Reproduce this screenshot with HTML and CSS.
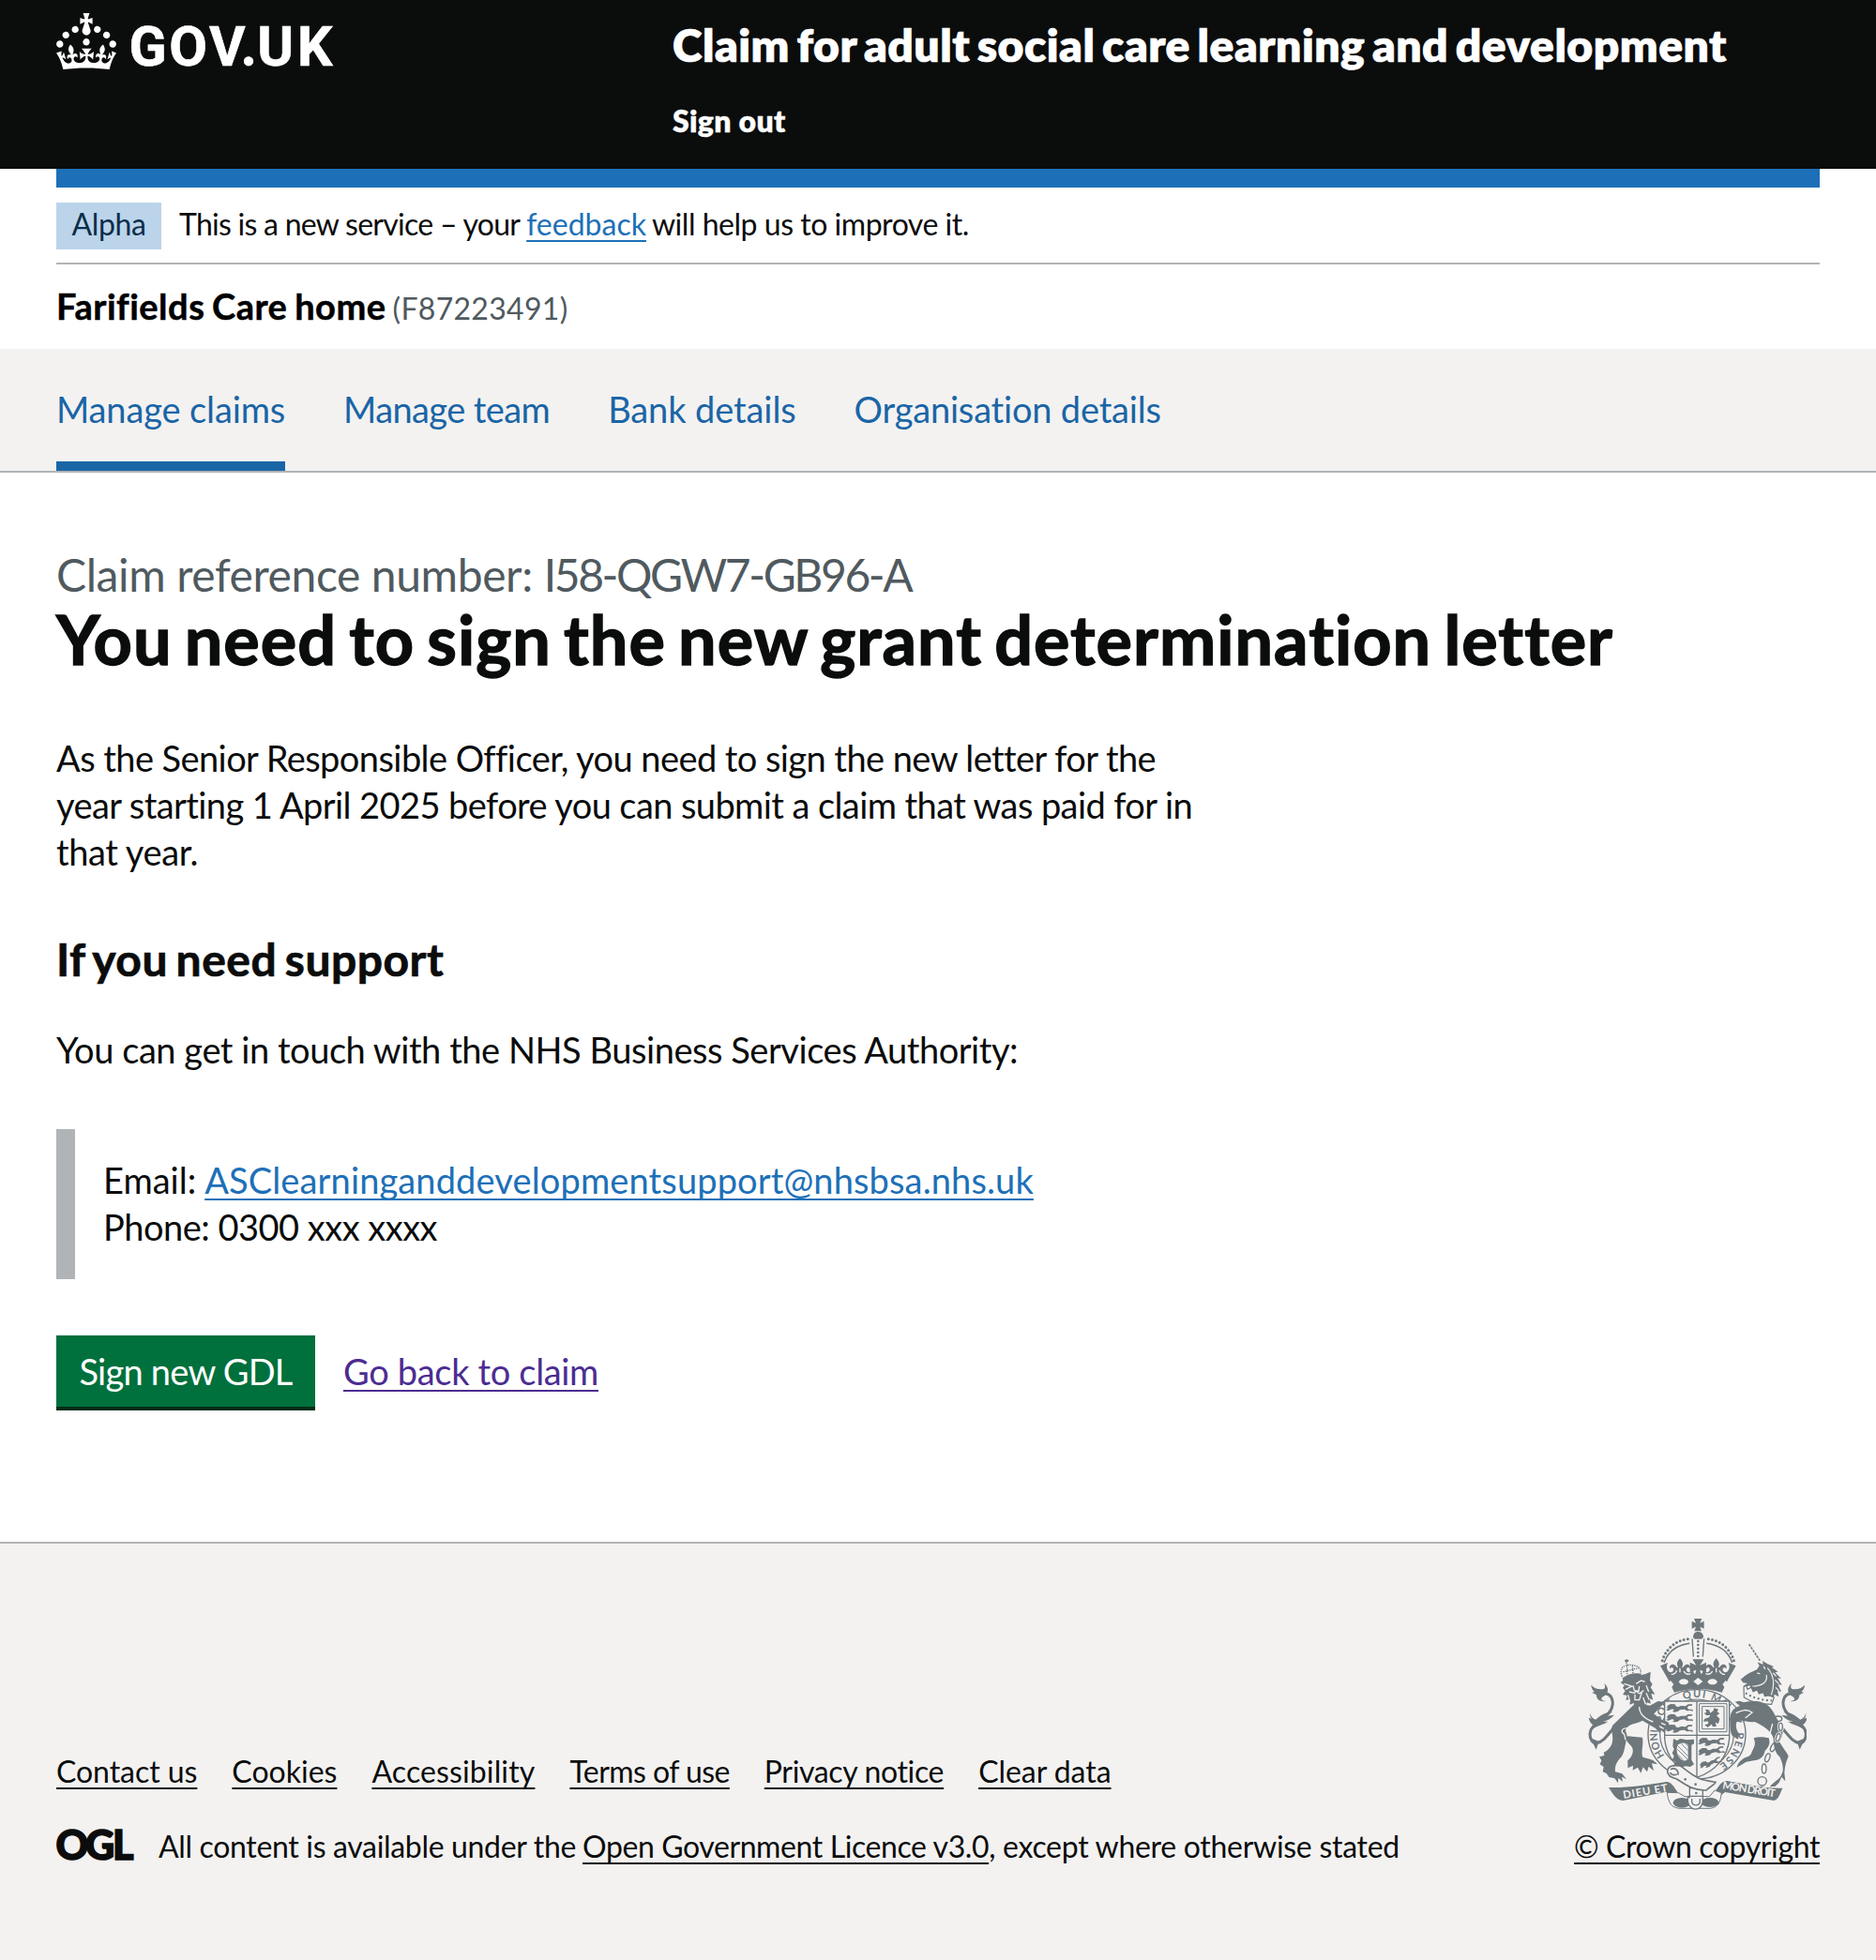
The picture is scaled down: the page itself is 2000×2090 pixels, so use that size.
FILE: index.html
```html
<!DOCTYPE html>
<html lang="en">
<head>
<meta charset="utf-8">
<title>You need to sign the new grant determination letter</title>
<link rel="stylesheet" href="styles.css">
</head>
<body>
<header class="header">
  <a class="header-logo" href="#" aria-label="GOV.UK">
    <svg width="300" height="76" viewBox="0 0 300 76">
      <path fill="#fff" transform="scale(2)" d="M22.6 10.4c-1 .4-2-.1-2.4-1-.4-.9.1-2 1-2.4.9-.4 2 .1 2.4 1s-.1 2-1 2.4m-13.2 0c.9.4 2-.1 2.4-1 .4-.9-.1-2-1-2.4-.9-.4-2 .1-2.4 1s0 2 1 2.4m7.3 6.7c-.9.4-2-.1-2.4-1-.4-.9.1-2 1-2.4.9-.4 2 .1 2.4 1s-.1 2-1 2.4m10.8-3.7c-1 .4-2-.1-2.4-1-.4-.9.1-2 1-2.4.9-.4 2 .1 2.4 1s0 2-1 2.4m3.3 4.8c-1 .4-2-.1-2.4-1-.4-.9.1-2 1-2.4.9-.4 2 .1 2.4 1s-.1 2-1 2.4M17 4.7l2.3 1.2V2.5l-2.3.7-.2-.2.9-3h-3.4l.9 3-.2.2c-.1.1-2.3-.7-2.3-.7v3.4L15 4.7c.1.1.1.2.2.2l-1.3 4c-.1.2-.1.4-.1.6 0 1.1.8 2 1.9 2.2h.7c1-.2 1.9-1.1 1.9-2.1 0-.2 0-.4-.1-.6l-1.3-4c-.1-.2 0-.2.1-.3M4.4 13.4c.9.4 2-.1 2.4-1 .4-.9-.1-2-1-2.4-.9-.4-2 .1-2.4 1s.1 2 1 2.4m-3.2 4.8c.9.4 2-.1 2.4-1 .4-.9-.1-2-1-2.4-.9-.4-2 .1-2.4 1s0 2 1 2.4m14.8 11c4.4 0 8.600.3 12.3.8 1.100-4.500 2.400-7 3.700-8.800l-2.500-.9c.2 1.300.3 1.900 0 2.700-.4-.4-.8-1.100-1.100-2.300l-1.200 4c.7-.5 1.300-.8 2-.9-1.100 2.500-2.600 3.100-3.500 3-1.100-.2-1.700-1.200-1.500-2.100.3-1.200 1.500-1.500 2.100-.1 1.100-2.300-.8-3-2-2.300 1.900-1.900 2.100-3.500.6-5.600-2.100 1.600-2.100 3.200-1.200 5.500-1.200-1.400-3.200-.6-2.500 1.600.9-1.400 2.100-.5 1.900.8-.2 1.100-1.700 2.100-3.500 1.900-2.700-.2-2.900-2.100-2.900-3.600.7-.1 1.900.5 2.900 1.900l.4-4.300c-1.100 1.100-2.100 1.400-3.200 1.400.4-1.200 2.100-3 2.100-3h-5.400s1.700 1.900 2.100 3c-1.100 0-2.100-.2-3.200-1.400l.4 4.300c1-1.400 2.200-2 2.900-1.900-.1 1.500-.2 3.400-2.900 3.600-1.900.2-3.400-.8-3.500-1.900-.2-1.300 1-2.200 1.900-.8.7-2.300-1.200-3-2.500-1.600.9-2.200.9-3.900-1.200-5.500-1.500 2-1.300 3.700.6 5.600-1.200-.7-3.100 0-2 2.300.6-1.400 1.800-1.100 2.100.1.2.9-.3 1.900-1.500 2.100-.9.2-2.400-.5-3.500-3 .6 0 1.200.3 2 .9l-1.200-4c-.3 1.100-.7 1.900-1.100 2.300-.3-.8-.2-1.400 0-2.700l-2.900.9C1.300 23 2.600 25.500 3.700 30c3.700-.5 7.900-.8 12.300-.8"/>
      <text class="logotype" x="77.500" y="56"><tspan class="logotype-gov">GOV</tspan><tspan class="logotype-dot" dx="-6">.</tspan><tspan class="logotype-uk" dx="2">UK</tspan></text>
    </svg>
  </a>
  <div class="header-content">
    <a class="service-name" href="#">Claim for adult social care learning and development</a>
    <a class="sign-out" href="#">Sign out</a>
  </div>
</header>

<div class="container">
  <div class="blue-bar"></div>
  <div class="phase-banner">
    <strong class="tag">Alpha</strong>
    <div class="phase-text"><span class="phase-a">This is a new service – your</span><a class="link phase-b" href="#">feedback</a><span class="phase-c">will help us to improve it.</span></div>
  </div>
  <div class="organisation"><span class="org-name">Farifields Care home</span><span class="org-code">(F87223491)</span></div>
</div>

<nav class="service-nav">
  <a class="nav-item nav-claims active" href="#">Manage claims</a>
  <a class="nav-item nav-team" href="#">Manage team</a>
  <a class="nav-item nav-bank" href="#">Bank details</a>
  <a class="nav-item nav-org" href="#">Organisation details</a>
</nav>

<main class="container main">
  <div class="caption">Claim reference number: <span class="reference">I58-QGW7-GB96-A</span></div>
  <h1>You need to sign the new grant determination letter</h1>
  <p class="body intro"><span class="l1">As the Senior Responsible Officer, you need to sign the new letter for the</span><br><span class="l2">year starting 1 April 2025 before you can submit a claim that was paid for in</span><br><span class="l3">that year.</span></p>
  <h2>If you need support</h2>
  <p class="body contact">You can get in touch with the NHS Business Services Authority:</p>
  <div class="inset">
    <div><span class="email-label">Email:</span><a class="link email" href="#">ASClearninganddevelopmentsupport@nhsbsa.nhs.uk</a></div>
    <div class="phone">Phone: 0300 xxx xxxx</div>
  </div>
  <div class="actions">
    <button class="button">Sign new GDL</button>
    <a class="link visited" href="#">Go back to claim</a>
  </div>
</main>

<footer class="footer">
  <div class="footer-meta">
    <div class="footer-links">
      <a class="flink f1" href="#">Contact us</a>
      <a class="flink f2" href="#">Cookies</a>
      <a class="flink f3" href="#">Accessibility</a>
      <a class="flink f4" href="#">Terms of use</a>
      <a class="flink f5" href="#">Privacy notice</a>
      <a class="flink f6" href="#">Clear data</a>
    </div>
    <div class="licence">
      <svg class="ogl" width="82" height="34" viewBox="0 0 82 34"><text class="ogl-text" y="33"><tspan x="-.500 31 60">OGL</tspan></text></svg>
      <div><span class="lic-a">All content is available under the</span><a class="flink lic-b" href="#">Open Government Licence v3.0</a><span class="lic-c">, except where otherwise stated</span></div>
    </div>
  </div>
  <div class="footer-crown">
    <svg class="crest" width="234" height="206" viewBox="69 45 702 618">
      <defs>
        <path id="ring" d="M317 486A126 118 0 1 1 442 534"/>
        <path id="passant" d="M0 5l9-4 13 1 4 7 8 1c10-6 16 0 24-4l6-4h14l-2 5h-10l-5 5 5 6h12l2 6-10-2-10 1-8-5-14 2-8 6-12 1-4-4 6-1-6-5-7 3-8 3-5-4 6-3-4-4z"/>
        <g id="tail">
          <path class="line" stroke-width="9" d="M160 392C136 416 120 446 98 446C84 446 78 430 78 416C78 380 152 366 151 316C150 298 142 290 128 287"/>
          <path d="M82 260c10 12 28 16 42 12 4-5 3-11-1-17 14 10 15 24 8 35-6 6-18 8-16 16 2 4 8 6 14 6-20 4-31-8-30-20l-15-8 9-1c-6-6-11-13-11-23z"/>
          <path d="M78 350c0 9 2 14 6 18l-10-3c3 14 10 22 18 24l-12 18c18-18 40-18 56-30l-16 1c14-4 28-12 36-22l-22 3 16-14c-22 2-40 14-54 26-10-4-15-12-18-21z"/>
          <path d="M80 430l18 37 6-18 12-4z"/>
        </g>
        <g id="half-crown">
          <path class="line" stroke-width="4.500" d="M397 127C355 133 326 156 315 189"/>
          <path class="line" stroke-width="9" stroke-linecap="round" stroke-dasharray="0 12.500" d="M391 113C350 118 318 148 308 188"/>
          <path d="M303 199l24-10-3 9c-1 10 3 18 9 21 8 2 14-4 12-11-2-5-9-4-11 1-4-10 4-17 13-14 4 2 7 5 9 9l4-1c-6-8-4-17 6-28 10 11 12 20 6 28l4 1c2-4 5-7 9-9 9-3 17 4 13 14-2-5-9-6-11-1-2 7 4 13 12 11 5-2 8-6 9-12l26 8v57q-46 0-86 12l-20-42z"/>
          <path class="cut" stroke-width="4" d="M338 226q12 2 18-12M366 206v14M378 216q8 14 22 8"/>
          <ellipse class="bg" cx="378" cy="250" rx="15" ry="9"/>
          <path class="bg" d="M336 246l10 12-8 12-12-14z"/>
        </g>
      </defs>
      <g class="ink">
        <use href="#tail"/>
        <use href="#tail" transform="matrix(-1 0 0 1 847 0)"/>
        <use href="#half-crown"/>
        <use href="#half-crown" transform="matrix(-1 0 0 1 848 0)"/>
        <path d="M411 48h25l-6 14 13-6v24l-13-6 5 14h-23l5-14-13 6v-24l13 6z"/>
        <path d="M408 108c0-12 6-18 16-18s17 6 17 18l-6 5h-22z"/>
        <path class="line" stroke-width="4" d="M405 112l4 58M443 112l-4 58"/>
        <path class="line" stroke-width="8" stroke-linecap="round" stroke-dasharray="0 12" d="M424 120v50"/>
        <path class="bg" d="M402 174h44v28l-10 22h-24l-10-22z"/>
        <path d="M406 178h36l-12 19 20-9v32l-20-8 4 16h-20l4-16-20 8v-32l20 9z"/>
        <path class="bg" d="M424 237l15 12-15 12-15-12z"/>

        <ellipse class="outline" cx="420" cy="418" rx="156" ry="143" stroke-width="4"/>
        <ellipse class="outline" cx="420" cy="418" rx="118" ry="112" stroke-width="3.500"/>
        <g class="motto">
          <text><textPath href="#ring" startOffset="0">HONI</textPath></text>
          <text><textPath href="#ring" startOffset="113">SOIT</textPath></text>
          <text><textPath href="#ring" startOffset="222" letter-spacing="4">QUI</textPath></text>
          <text><textPath href="#ring" startOffset="308">MAL</textPath></text>
          <text><textPath href="#ring" startOffset="405">Y</textPath></text>
          <text><textPath href="#ring" startOffset="450" letter-spacing="5">PENSE</textPath></text>
        </g>
        <path class="outline" stroke-width="4" d="M317 312H524V430C520 490 480 536 420 556C360 536 321 490 317 430Z"/>
        <path class="line" stroke-width="4" d="M420 312v244M317 421h207"/>
        <use href="#passant" x="328" y="320"/><use href="#passant" x="328" y="352"/><use href="#passant" x="328" y="386"/>
        <use href="#passant" x="430" y="428"/>
        <use href="#passant" transform="translate(428 462) rotate(-6)"/>
        <use href="#passant" transform="translate(430 508) rotate(-18) scale(.85)"/>
        <path class="line" stroke-width="3" d="M428 320h88v90h-88zM437 329h70v72h-70z"/>
        <path d="M447 338l12 2 4 10 10-8 2-8 14 4-4 8 8 6-10 6 10 10-4 16-10-4 4 12-12 2-4-8-12 10-10-8 12-4-2-8-14 2 4-10 14-4 4-8-12 2-8-8 8-2z"/>
        <path d="M345 432l12 6 10-6 20 4 24-2v14l-8 4v48l8 14-12 8-16-2-12 4-10-6-14-2 4-10-10-6 6-12-6-10 6-12-4-10z"/>
        <path class="bg" d="M358 452c14-10 28-8 34 0v44c-4 10-22 8-28-4-8-10-10-26-6-40z"/>
        <path class="line" stroke-width="2.500" d="M358 454l34 34M358 466l32 32M370 448l22 22M382 446l12 12M360 484l16 16"/>

        <path d="M150 390L224 318l46 8 26-14 22 3-36 38 26 18 20 8 12 26-12 4-8-8-2 14-12-10-6 8-12-14-42-25c-20 12-46 8-54 30 0 10 8 12 3 30-5 20-6 40-16 56-14 14-22 28-20 48l22 6 14 18-15-8 3 16-14-12-1 16-11-15-18-4-8-12-12-5 3-16-12-8 5-12-7-12 16-4-2-10c12-5 18-12 24-22 8-18 4-34 1-52z"/>
        <path d="M198 424l48 4c4 22-4 42 0 62 8 8 32 2 48 24l-18-3 6 24-16-14-5 17-13-15-7 19-10-18-16 9 1-15-17 8v-24c18-16 22-38 8-50-8-8-14-14-13-24z"/>
        <path class="cut" stroke-width="4" d="M196 398c-18 2-20 12-8 20l4 18M236 330c0 22 16 38 44 48M300 392l14 8M306 382l14 6"/>
        <path d="M176 253l14-12 66-16 16-7-2 28 8 12-6 10 14 22-12-2 6 20-10-4 2 16-12-4-4 20-18-8-14 4-6-14-12 5-1-16-12 1 4-14-14-3 8-12-8-10 6-8z"/>
        <path class="cut" stroke-width="4" d="M188 256l24 8-20 10M226 256l16-10 12 4M216 262l4 16 14 2 2-16M204 282l16 4 6-6 10 8 14-10M222 290v18h14l8-24M258 262l8 20M258 286l10 22M200 292l6 22M248 300l8 22"/>
        <path d="M182 238q28-20 60-14l-1 11q-30-4-56 14z"/>
        <path class="line" stroke-width="4" stroke-dasharray="4 3" d="M181 234c-10-26 4-36 18-37 20-3 46 4 41 26M197 194v36M214 198l2 26M184 218l50-12"/>
        <path d="M190 180h4v-3h3v3h5v5h-5v8h-4v-8h-4z"/>

        <path class="line" stroke-width="5" stroke-dasharray="8 3" d="M587 130l36 54"/>
        <path d="M560 242l8-6c16-14 30-18 44-25l8-12-6-12 18 8-2-12 16 10 20 8-6 3 20 14-10 2 20 20-12-2 14 22-12-2 10 24-12-4 4 20-14-8-4 20c-20 8-64-8-80-30l8-18-12 3-12-2 14-8-14-2z"/>
        <path class="cut" stroke-width="3.500" d="M612 222l10 2M642 228c6 22-12 36-44 36M646 206c20 22 24 52 12 86M634 200l4 10M664 222l10 10M670 244l12 12M672 268l10 10"/>
        <path class="outline" stroke-width="3.500" d="M570 266l8-4 4 12 12-6 6 13 13-5 6 12 14-4 4 12 14-2 16 6-8 22c-32 0-66-8-88-22z"/>
        <path class="line" stroke-width="6" stroke-dasharray="6 8" d="M576 286c20 14 54 24 84 24"/>
        <path d="M526 372c0-30 16-40 32-45l-16-13 14-3 14 5c34-8 64-4 82 14 14 14 18 30 32 50 16 20 12 44 0 62 10 18 24 34 29 46-8 18-12 34-13 54l3 26-12-14-8 18-12 12-18 2c14-20 34-20 42-50 2-20-4-32-10-46-14-10-20-34-20-58-4-22-30-40-60-54-22 4-38-8-56-2-8 14-1 34 8 42l-6 16-18-12c-8-16-6-32-7-50z"/>
        <path d="M602 430c20-6 40-2 48 0 8 16-4 34-12 40-6 26-18 28-36 32l-24 4-30 18c2-12 14-26 28-32 20-4 18-16 24-26 6-12 8-20 2-36z"/>
        <path class="cut" stroke-width="4" d="M545 350c20-10 34-14 52-2l-22 18M662 384l-10 40 4 20"/>
        <g class="link-gap"><ellipse cx="688" cy="394" rx="7" ry="13"/><ellipse cx="680" cy="428" rx="7" ry="14" transform="rotate(18 680 428)"/></g>
        <g class="links"><ellipse cx="680" cy="368" rx="12" ry="8"/><ellipse cx="688" cy="394" rx="6" ry="12"/><ellipse cx="680" cy="428" rx="6" ry="13" transform="rotate(18 680 428)"/><ellipse cx="664" cy="460" rx="7" ry="14" transform="rotate(25 664 460)"/><ellipse cx="646" cy="493" rx="7" ry="14" transform="rotate(20 646 493)"/><ellipse cx="635" cy="528" rx="7" ry="15"/><circle cx="629" cy="568" r="14"/></g>

        <path d="M138 588c60 2 120-8 184-18 18 0 24 16 35 30-2 12-10 18-19 18l-16-16-138 28c-24-2-32-22-46-42z"/>
        <path d="M694 590c-60 2-120-14-178-23-18 0-24 16-34 28-2 10 6 18 16 18l12-10 156 27c14-2 20-22 28-40z"/>
        <text class="scroll" transform="translate(186 624) rotate(-9.500)" textLength="144">DIEU ET</text>
        <text class="scroll" transform="translate(501 592) rotate(9)" textLength="170">MON DROIT</text>
        <path class="outline" stroke-width="3" d="M325 604c4 34 14 50 42 51h96c26-4 32-20 36-50l-22-8-16 20h-80l-20-12z"/>
        <ellipse cx="372" cy="637" rx="28" ry="16"/><ellipse cx="462" cy="636" rx="28" ry="15"/>
        <path class="outline" stroke-width="4" d="M397 590h42v42c-2 34-44 34-48 0v-12h6z"/>
        <path class="line" stroke-width="4" d="M404 624v10c2 14 24 14 26 0v-10M397 616h42"/>
        <path class="outline" stroke-width="5" d="M326 538c0-20 20-22 40-19 14 6 24 22 60 40 20 8 38 10 54 12-8 14-16 12-30 26-40 2-70-20-94-36-14-4-28-8-30-23z"/>
        <path class="line" stroke-width="5" d="M336 530c14-6 26 2 24 18M334 540c4 8 14 10 22 6"/>
        <circle cx="383" cy="562" r="4"/><circle cx="416" cy="578" r="4"/><circle cx="418" cy="606" r="4"/>
      </g>
    </svg>
    <a class="flink copyright" href="#">© Crown copyright</a>
  </div>
</footer>
</body>
</html>
```
FILE: styles.css
```css
* { box-sizing: border-box; }

body {
  margin: 0;
  background: #fff;
  color: #0b0c0c;
  font-family: Lato, "Liberation Sans", sans-serif;
  font-size: 38px;
  line-height: 50px;
  white-space: nowrap;
}

a { color: inherit; text-decoration: none; }

.container { margin: 0 60px; }

.header {
  display: flex;
  height: 180px;
  padding: 0 60px;
  background: #0b0c0c;
  color: #fff;
}
.header-logo { display: flex; align-items: flex-start; width: 657px; padding-top: 14px; }
.logotype { font-family: Roboto, sans-serif; font-weight: 700; font-size: 59px; fill: #fff; stroke: #fff; stroke-width: .6; }
.logotype-gov { letter-spacing: 2.6px; }
.logotype-uk { letter-spacing: 4px; }
.logotype-dot { font-family: Lato, sans-serif; font-weight: 900; }
.header-content { display: flex; flex-direction: column; padding-top: 18px; font-weight: 800; }
.service-name { font-size: 48px; line-height: 60px; letter-spacing: .5px; word-spacing: -4px; -webkit-text-stroke: .7px; }
.sign-out { margin-top: 31px; font-size: 32px; line-height: 40px; letter-spacing: .3px; -webkit-text-stroke: .3px; }

.blue-bar { height: 20px; background: #1d70b8; }
.phase-banner {
  display: flex;
  height: 82px;
  padding-top: 16px;
  border-bottom: 2px solid #b1b4b6;
  font-size: 32px;
  line-height: 46px;
}
.tag {
  width: 112px;
  height: 50px;
  margin-right: 19px;
  background: #bbd4ea;
  color: #0c2d4a;
  font-weight: 400;
  letter-spacing: -.4px;
  text-align: center;
}
.phase-a { letter-spacing: -.73px; margin-right: 7px; }
.phase-b { letter-spacing: 0; margin-right: 6px; }
.phase-c { letter-spacing: -.47px; }

.link { color: #1d70b8; }
.link, .flink {
  text-decoration: underline;
  text-decoration-thickness: 2px;
  text-underline-offset: 5px;
  text-decoration-skip-ink: none;
}
.link.visited { color: #4c2c92; letter-spacing: -.33px; }

.organisation { height: 90px; padding-top: 19px; }
.org-name { color: #000; font-weight: 700; letter-spacing: .5px; word-spacing: -2px; margin-right: 7px; -webkit-text-stroke: .5px; }
.org-code { color: #505a5f; font-size: 32px; letter-spacing: .3px; }

.service-nav {
  display: flex;
  gap: 62px;
  height: 132px;
  padding: 0 60px;
  background: #f3f2f1;
  border-bottom: 2px solid #b1b4b6;
  color: #1a65a6;
}
.nav-item { padding-top: 39px; height: 130px; }
.nav-item.active { border-bottom: 10px solid #1a65a6; }
.nav-claims { letter-spacing: -.13px; }
.nav-team { letter-spacing: -.6px; }
.nav-bank { letter-spacing: -.1px; }
.nav-org { letter-spacing: -.19px; }

.main { height: 1140px; padding-top: 79px; }
.caption { color: #505a5f; font-size: 48px; line-height: 60px; letter-spacing: -.4px; }
.reference { letter-spacing: -2.4px; }
h1 { margin: -2px 0 0; font-size: 72px; line-height: 80px; letter-spacing: 1px; word-spacing: -5.3px; -webkit-text-stroke: 1.4px; }
h2 { margin: 60px 0 0; font-size: 48px; line-height: 60px; letter-spacing: .5px; word-spacing: -3.500px; -webkit-text-stroke: .7px; }
.body { margin: 0; }
.intro { margin-top: 62px; }
.l1 { letter-spacing: -.57px; }
.l2 { letter-spacing: -.59px; }
.l3 { letter-spacing: -.4px; }
.contact { margin-top: 41px; letter-spacing: -.45px; }
.inset {
  height: 160px;
  margin-top: 60px;
  padding: 29px 0 0 30px;
  border-left: 20px solid #b1b4b6;
}
.email-label { margin-right: 9px; }
.email { letter-spacing: .13px; }
.phone { letter-spacing: -.5px; }
.actions { display: flex; gap: 30px; margin-top: 60px; line-height: 76px; }
.button {
  width: 276px;
  height: 76px;
  padding: 0 0 2px;
  border: 0;
  background: #00703c;
  box-shadow: 0 4px 0 #002d18;
  color: #fff;
  font: inherit;
  letter-spacing: -.76px;
}

.footer {
  display: flex;
  justify-content: space-between;
  height: 446px;
  padding: 0 60px;
  border-top: 2px solid #b1b4b6;
  background: #f3f2f1;
  font-size: 32px;
  line-height: 40px;
}
.footer-links { display: flex; gap: 37px; margin-top: 223px; }
.licence { display: flex; align-items: flex-start; margin-top: 40px; }
.ogl { margin: 1px 27px 0 0; overflow: visible; }
.ogl-text { font-family: Lato, sans-serif; font-weight: 900; font-size: 43px; fill: #0b0c0c; stroke: #0b0c0c; stroke-width: 1.6; }
.f1 { letter-spacing: -.05px; }
.f2 { letter-spacing: 0; }
.f3 { letter-spacing: .13px; }
.f4 { letter-spacing: -.56px; }
.f5 { letter-spacing: -.35px; }
.f6 { letter-spacing: -.05px; }
.lic-a { letter-spacing: -.33px; margin-right: 7px; }
.lic-b { letter-spacing: -.4px; }
.lic-c { letter-spacing: -.29px; }
.footer-crown { display: flex; flex-direction: column; align-items: center; padding: 79px 0 0 1px; }
.copyright { margin-top: 18px; letter-spacing: -.38px; }

.ink { fill: #6e777b; }
.line { fill: none; stroke: #6e777b; }
.outline { fill: #f3f2f1; stroke: #6e777b; }
.cut { fill: none; stroke: #f3f2f1; }
.bg { fill: #f3f2f1; }
.links { fill: none; stroke: #6e777b; stroke-width: 4; }
.link-gap { fill: #f3f2f1; stroke: #f3f2f1; stroke-width: 7; }
.motto { font-size: 33px; font-weight: 700; }
.scroll { font-size: 34px; font-weight: 700; fill: #f3f2f1; }
```
